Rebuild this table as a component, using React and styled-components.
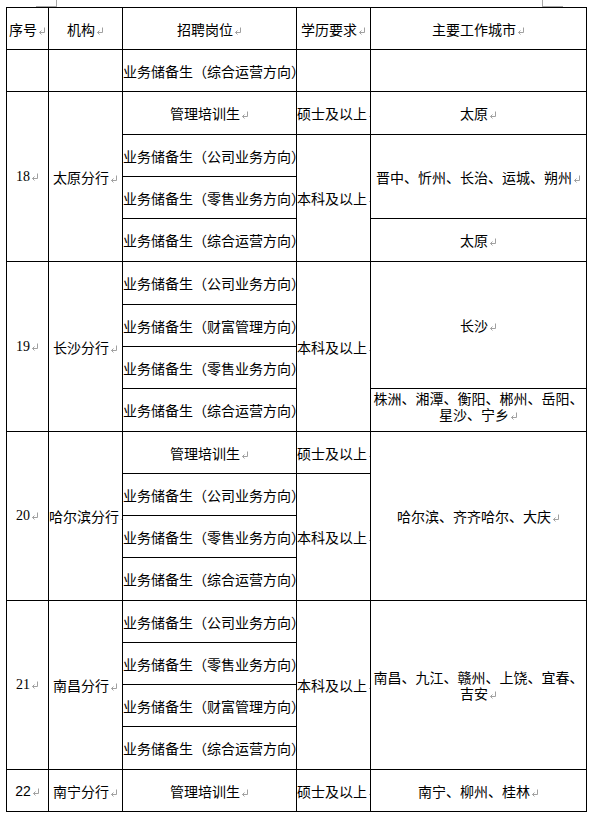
import styled, { createGlobalStyle } from "styled-components";

/* ================= GLOBAL ================= */

const GlobalStyle = createGlobalStyle`
  html, body {
    margin: 0;
    padding: 0;
    background: #ffffff;
  }

  body {
    font-family: "Noto Sans CJK SC", "Noto Sans", sans-serif;
    color: #000000;
  }
`;

/* ================= PAGE ================= */

const Page = styled.div`
  width: 591px;
  height: 819px;
  overflow: hidden;
  background: #ffffff;
`;

/* margin corner marks that Word draws above the table */
const MarginStrip = styled.div`
  height: 7px;
  display: flex;
  justify-content: space-between;
  padding: 0 28px 0 36px;
`;

const CornerMark = styled.div`
  width: 20px;
  height: 6px;
  border-bottom: 1px solid #a8a8a8;
  border-left: ${(p) => (p.$side === "right" ? "1px solid #a8a8a8" : "none")};
  border-right: ${(p) => (p.$side === "left" ? "1px solid #a8a8a8" : "none")};
`;

/* ================= TABLE ================= */

const Table = styled.table`
  margin-left: 6px;
  width: 580px;
  table-layout: fixed;
  border-collapse: collapse;
`;

const Row = styled.tr`
  height: ${(p) => p.$h}px;
`;

const Cell = styled.td`
  border: 1px solid #000000;
  padding: 0 0 ${(p) => (p.$lift ? "9px" : "0")} 0;
  text-align: center;
  vertical-align: middle;
  font-size: 14px;
  line-height: 16px;
  color: #000000;
  overflow: hidden;
  white-space: ${(p) => (p.$wrap ? "normal" : "nowrap")};
  font-family: ${(p) =>
    p.$num === "serif"
      ? '"Liberation Serif", serif'
      : p.$num === "sans"
      ? '"Liberation Sans", sans-serif'
      : '"Noto Sans CJK SC", "Noto Sans", sans-serif'};
`;

const Return = styled.svg`
  width: 8px;
  height: 8px;
  margin-left: 1px;
  vertical-align: 0px;
`;

const Mark = () => (
  <Return viewBox="0 0 8 8">
    <path
      d="M6.5 0.5 V5.5 H1.5 M3.5 3.5 L1.5 5.5 L3.5 7.5"
      fill="none"
      stroke="#a0a0a0"
      strokeWidth="1"
    />
  </Return>
);

const T = ({ children, mark = true }) => (
  <>
    {children}
    {mark && <Mark />}
  </>
);

/* line positions of the source table, so row heights match */
const lines = [7, 49, 91, 134, 176, 218, 261, 304, 346, 388, 431, 473, 515, 557, 600, 642, 684, 726, 769, 811];
const h = lines.slice(1).map((y, i) => y - lines[i]);

const job = (dir) => `业务储备生（${dir}）`;

export default function App() {
  return (
    <Page>
      <GlobalStyle />

      <MarginStrip>
        <CornerMark $side="left" />
        <CornerMark $side="right" />
      </MarginStrip>

      <Table>
        <colgroup>
          <col style={{ width: 42 }} />
          <col style={{ width: 74 }} />
          <col style={{ width: 174 }} />
          <col style={{ width: 74 }} />
          <col style={{ width: 216 }} />
        </colgroup>
        <tbody>
          <Row $h={h[0]}>
            <Cell><T>序号</T></Cell>
            <Cell><T>机构</T></Cell>
            <Cell><T>招聘岗位</T></Cell>
            <Cell><T>学历要求</T></Cell>
            <Cell><T>主要工作城市</T></Cell>
          </Row>

          <Row $h={h[1]}>
            <Cell />
            <Cell />
            <Cell><T>{job("综合运营方向")}</T></Cell>
            <Cell />
            <Cell />
          </Row>

          {/* 18 太原分行 */}
          <Row $h={h[2]}>
            <Cell rowSpan={4} $num="serif"><T>18</T></Cell>
            <Cell rowSpan={4}><T>太原分行</T></Cell>
            <Cell><T>管理培训生</T></Cell>
            <Cell><T>硕士及以上</T></Cell>
            <Cell><T>太原</T></Cell>
          </Row>
          <Row $h={h[3]}>
            <Cell><T>{job("公司业务方向")}</T></Cell>
            <Cell rowSpan={3}><T>本科及以上</T></Cell>
            <Cell rowSpan={2} $wrap><T>晋中、忻州、长治、运城、朔州</T></Cell>
          </Row>
          <Row $h={h[4]}>
            <Cell><T>{job("零售业务方向")}</T></Cell>
          </Row>
          <Row $h={h[5]}>
            <Cell><T>{job("综合运营方向")}</T></Cell>
            <Cell><T>太原</T></Cell>
          </Row>

          {/* 19 长沙分行 */}
          <Row $h={h[6]}>
            <Cell rowSpan={4} $num="serif"><T>19</T></Cell>
            <Cell rowSpan={4}><T>长沙分行</T></Cell>
            <Cell><T>{job("公司业务方向")}</T></Cell>
            <Cell rowSpan={4}><T>本科及以上</T></Cell>
            <Cell rowSpan={3}><T>长沙</T></Cell>
          </Row>
          <Row $h={h[7]}>
            <Cell><T>{job("财富管理方向")}</T></Cell>
          </Row>
          <Row $h={h[8]}>
            <Cell><T>{job("零售业务方向")}</T></Cell>
          </Row>
          <Row $h={h[9]}>
            <Cell><T>{job("综合运营方向")}</T></Cell>
            <Cell $wrap $lift><T>株洲、湘潭、衡阳、郴州、岳阳、星沙、宁乡</T></Cell>
          </Row>

          {/* 20 哈尔滨分行 */}
          <Row $h={h[10]}>
            <Cell rowSpan={4} $num="serif"><T>20</T></Cell>
            <Cell rowSpan={4}><T>哈尔滨分行</T></Cell>
            <Cell><T>管理培训生</T></Cell>
            <Cell><T>硕士及以上</T></Cell>
            <Cell rowSpan={4} $wrap><T>哈尔滨、齐齐哈尔、大庆</T></Cell>
          </Row>
          <Row $h={h[11]}>
            <Cell><T>{job("公司业务方向")}</T></Cell>
            <Cell rowSpan={3}><T>本科及以上</T></Cell>
          </Row>
          <Row $h={h[12]}>
            <Cell><T>{job("零售业务方向")}</T></Cell>
          </Row>
          <Row $h={h[13]}>
            <Cell><T>{job("综合运营方向")}</T></Cell>
          </Row>

          {/* 21 南昌分行 */}
          <Row $h={h[14]}>
            <Cell rowSpan={4} $num="serif"><T>21</T></Cell>
            <Cell rowSpan={4}><T>南昌分行</T></Cell>
            <Cell><T>{job("公司业务方向")}</T></Cell>
            <Cell rowSpan={4}><T>本科及以上</T></Cell>
            <Cell rowSpan={4} $wrap><T>南昌、九江、赣州、上饶、宜春、吉安</T></Cell>
          </Row>
          <Row $h={h[15]}>
            <Cell><T>{job("零售业务方向")}</T></Cell>
          </Row>
          <Row $h={h[16]}>
            <Cell><T>{job("财富管理方向")}</T></Cell>
          </Row>
          <Row $h={h[17]}>
            <Cell><T>{job("综合运营方向")}</T></Cell>
          </Row>

          {/* 22 南宁分行 */}
          <Row $h={h[18]}>
            <Cell $num="sans"><T>22</T></Cell>
            <Cell><T>南宁分行</T></Cell>
            <Cell><T>管理培训生</T></Cell>
            <Cell><T>硕士及以上</T></Cell>
            <Cell><T>南宁、柳州、桂林</T></Cell>
          </Row>
        </tbody>
      </Table>
    </Page>
  );
}
